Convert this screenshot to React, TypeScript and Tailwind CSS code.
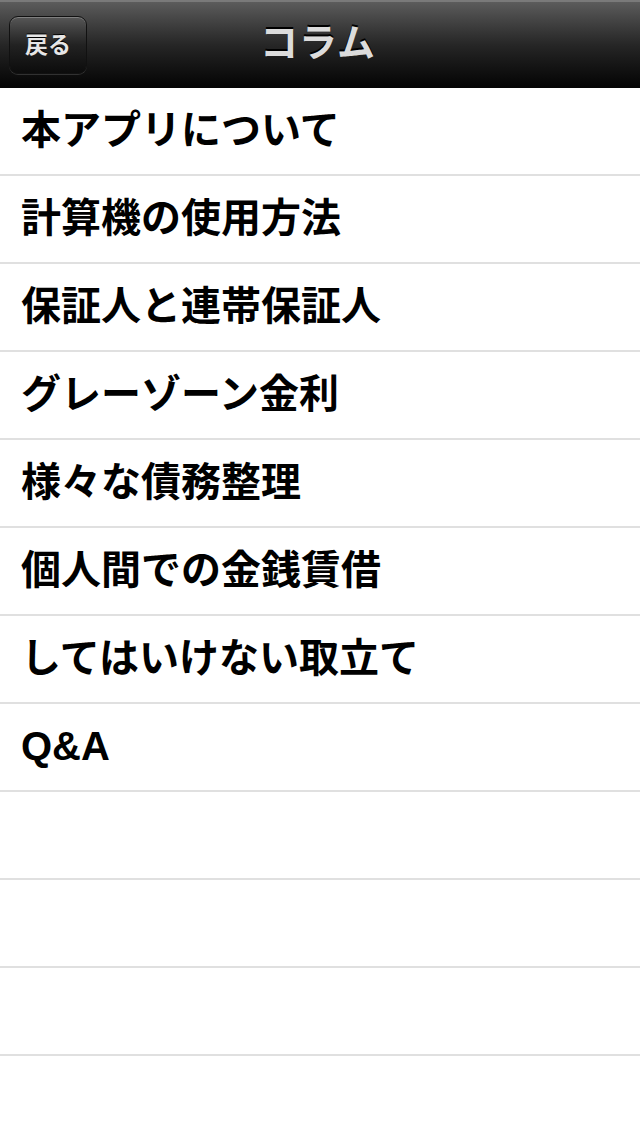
import React from "react";

const items = [
  "本アプリについて",
  "計算機の使用方法",
  "保証人と連帯保証人",
  "グレーゾーン金利",
  "様々な債務整理",
  "個人間での金銭賃借",
  "してはいけない取立て",
  "Q&A",
  "",
  "",
  "",
  "",
];

export default function App() {
  return (
    <div
      className="w-[640px] h-[1136px] overflow-hidden bg-white"
      style={{ fontFamily: '"Liberation Sans", "Noto Sans CJK JP", sans-serif' }}
    >
      <div className="h-[88px] relative flex items-center justify-center border-t-2 border-[#7a7a7a] bg-gradient-to-b from-[#5c5c5c] via-[#262626] to-[#050505]">
        <div className="absolute left-[9px] top-[14px] w-[78px] h-[58px] rounded-[9px] border border-[#111] bg-gradient-to-b from-[#575757] via-[#222] to-[#0c0c0c] shadow-[inset_0_1px_0_rgba(255,255,255,0.25),0_1px_0_rgba(255,255,255,0.15)] flex items-center justify-center">
          <span className="text-[23px] font-semibold text-[#e6e6e6] [text-shadow:0_-1px_0_#000]">戻る</span>
        </div>
        <span className="text-[38px] font-bold text-[#dcdcdc] tracking-[1px] [text-shadow:0_-2px_0_#000] -mt-[4px] -ml-[4px]">
          コラム
        </span>
      </div>
      <div className="flex flex-col">
        {items.map((t, i) => (
          <div
            key={i}
            className="h-[88px] shrink-0 flex items-center pl-[21px] border-b-2 border-[#e0e0e0]"
          >
            <span className="text-[40px] font-bold text-black leading-none -mt-[3px]">{t}</span>
          </div>
        ))}
      </div>
    </div>
  );
}
